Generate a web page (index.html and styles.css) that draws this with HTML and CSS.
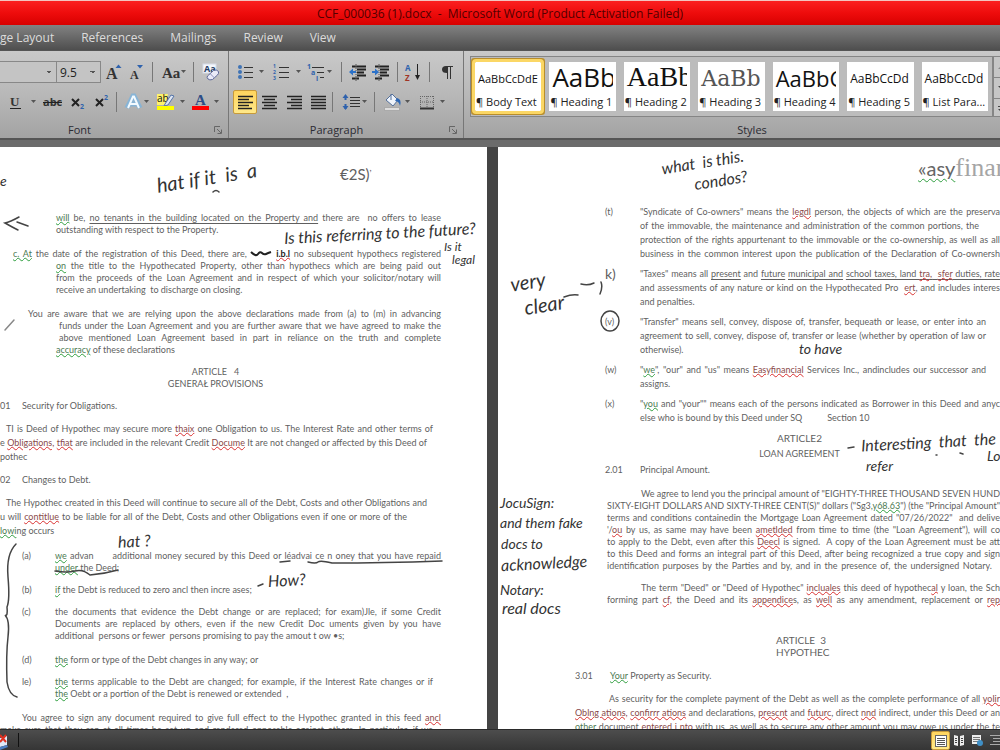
FILE: index.html
```html
<!DOCTYPE html>
<html lang="en">
<head>
<meta charset="utf-8">
<title>CCF_000036 (1).docx - Microsoft Word (Product Activation Failed)</title>
<link rel="stylesheet" href="styles.css">
</head>
<body>
<div class="app">
<header class="titlebar"><h1>CCF_000036 (1).docx &nbsp;-&nbsp; Microsoft Word (Product Activation Failed)</h1></header>
<nav class="tabs"><a href="#">ge Layout</a><a href="#">References</a><a href="#">Mailings</a><a href="#">Review</a><a href="#">View</a></nav>

<section class="ribbon">
  <div class="group group-font">
    <div class="tools">
      <select class="combo combo-name" aria-label="Font name"><option></option></select>
      <select class="combo combo-size" aria-label="Font size"><option>9.5</option></select>
      <button aria-label="Grow font"><svg width="24" height="24"><text x="5" y="19" class="g-serif" font-size="16">A</text><path d="M14.500 8l3-3.500 3 3.500z" fill="#2f62ad"/></svg></button>
      <button aria-label="Shrink font"><svg width="22" height="24"><text x="5" y="19" class="g-serif" font-size="12">A</text><path d="M12 5h6l-3 3.500z" fill="#2f62ad"/></svg></button>
      <i class="sep"></i>
      <button aria-label="Change case"><svg width="30" height="24"><text x="4" y="18" class="g-serif" font-size="15">Aa</text><path d="M23 10h5l-2.500 3z" fill="#555"/></svg></button>
      <i class="sep"></i>
      <button aria-label="Clear formatting"><svg width="24" height="24"><rect x="4" y="4" width="13" height="9" fill="#f4f7fc" stroke="#d5dbe8"/><text x="5" y="12" font-size="9" font-weight="700" fill="#223c66">Aa</text><path d="M8.500 16l6-5.500q3-1.500 5 1 .5 2-1 3.500l-5 4.500q-3 1-4.500-.5-1.500-1.500-.5-3z" fill="#e9eaf7" stroke="#5c6798"/><path d="M11 13.500l4.500 4.500" stroke="#8c93bd"/></svg></button>
    </div>
    <div class="tools tools-low">
      <button aria-label="Underline"><svg width="24" height="24"><text x="7" y="16" class="g-serif" font-size="13" >U</text><path d="M7 18.500h11" stroke="#222"/></svg></button>
      <button aria-label="Underline style"><svg width="13" height="24"><path d="M4 10h5l-2.500 3z" fill="#555"/></svg></button>
      <button aria-label="Strikethrough"><svg width="25" height="24"><text x="3" y="16" font-size="11" font-weight="700" fill="#333">abc</text><path d="M3 12.500h19" stroke="#222"/></svg></button>
      <button aria-label="Subscript"><svg width="24" height="24"><path d="M7 9l7 7M14 9l-7 7" stroke="#222" stroke-width="2"/><text x="15" y="19" font-size="7" font-weight="700" fill="#2f62ad">2</text></svg></button>
      <button aria-label="Superscript"><svg width="22" height="24"><path d="M7 9l7 7M14 9l-7 7" stroke="#222" stroke-width="2"/><text x="15" y="10" font-size="7" font-weight="700" fill="#2f62ad">2</text></svg></button>
      <i class="sep"></i>
      <button aria-label="Text effects"><svg width="21" height="24"><path d="M5 18L11 6h1l6 12M8 14h8" fill="none" stroke="#74b3e4" stroke-width="5" opacity=".7"/><path d="M6 18L11 6.500h1L17 18M8.500 14h6" fill="none" stroke="#f3faff" stroke-width="2"/></svg></button>
      <button aria-label="Text effect styles"><svg width="11" height="24"><path d="M1 10h5l-2.500 3z" fill="#555"/></svg></button>
      <button aria-label="Highlight"><svg width="25" height="24"><path d="M3 4h11l-3 11H3z" fill="#fff36b"/><text x="3" y="12" font-size="10" fill="#111">ab</text><path d="M11 14l6-9 3 1-6 9-4 1z" fill="#dfe6f3" stroke="#5575a8"/><rect x="3" y="16" width="17" height="4" fill="#ff0"/></svg></button>
      <button aria-label="Highlight colour"><svg width="11" height="24"><path d="M1 10h5l-2.500 3z" fill="#555"/></svg></button>
      <button aria-label="Font colour"><svg width="23" height="24"><text x="5" y="15" class="g-serif" font-size="15" style="fill:#2c4d87">A</text><rect x="2" y="16" width="17" height="4" fill="#f00"/></svg></button>
      <button aria-label="Font colours"><svg width="11" height="24"><path d="M1 10h5l-2.500 3z" fill="#555"/></svg></button>
    </div>
    <div class="caption"><span>Font</span><button aria-label="Font dialog"><svg width="10" height="10"><path d="M1.500 7V1.500H7M4 4l4 4M8.500 4.500v4h-4" fill="none" stroke="#666"/></svg></button></div>
  </div>

  <div class="group group-para">
    <div class="tools">
      <button aria-label="Bullets"><svg width="35" height="24"><g fill="#3f73b5"><circle cx="4" cy="7" r="2"/><circle cx="4" cy="12" r="2"/><circle cx="4" cy="17" r="2"/></g><path d="M8 7.500h9M8 12.500h9M8 17.500h9" stroke="#333"/><path d="M23 10h5l-2.500 3z" fill="#555"/></svg></button>
      <button aria-label="Numbering"><svg width="34" height="24"><g fill="#2f62ad" font-size="5" font-weight="700"><text x="2" y="8">1</text><text x="2" y="14">2</text><text x="2" y="20">3</text></g><path d="M8 7.500h10M8 12.500h10M8 17.500h10" stroke="#333"/><path d="M25 10h5l-2.500 3z" fill="#555"/></svg></button>
      <button aria-label="Multilevel list"><svg width="31" height="24"><g fill="#2f62ad" font-size="7" font-weight="700"><text x="2" y="9">1</text><text x="6" y="15">a</text><text x="11" y="21">i</text></g><path d="M7 7.500h12M12 12.500h7M15 17.500h4" stroke="#333"/><path d="M22 10h5l-2.500 3z" fill="#555"/></svg></button>
      <i class="sep"></i>
      <button aria-label="Decrease indent"><svg width="23" height="24"><path d="M5 6.500h14M10 9.500h9M10 12.500h7M10 15.500h9M5 18.500h7" stroke="#222" stroke-width="2"/><path d="M9 4v17" stroke="#555" stroke-dasharray="1 1"/><path d="M2 12l4-3.500V11h3v2H6v2.500z" fill="#2c72c9"/></svg></button>
      <button aria-label="Increase indent"><svg width="22" height="24"><path d="M5 6.500h14M10 9.500h9M10 12.500h7M10 15.500h9M5 18.500h7" stroke="#222" stroke-width="2"/><path d="M9 4v17" stroke="#555" stroke-dasharray="1 1"/><path d="M9 12L5 8.500V11H2v2h3v2.500z" fill="#2c72c9"/></svg></button>
      <i class="sep"></i>
      <button aria-label="Sort"><svg width="21" height="24"><text x="2" y="11" font-size="8" font-weight="700" fill="#2f62ad">A</text><text x="2" y="21" font-size="8" font-weight="700" fill="#a03426">Z</text><path d="M14.500 4v14" stroke="#222"/><path d="M12 15h5l-2.500 5z" fill="#222"/></svg></button>
      <i class="sep"></i>
      <button aria-label="Show marks"><svg width="22" height="24"><path d="M12.500 6v13M15.500 6v13" stroke="#333"/><path d="M17 6H11q-4 0-4 3.500T12 13V6z" fill="#333"/><path d="M11 6.500h7" stroke="#333"/></svg></button>
    </div>
    <div class="tools tools-low">
      <button class="on" aria-label="Align left"><svg width="22" height="22"><path d="M4 5.500h15M4 8.500h11M4 11.500h15M4 14.500h11M4 17.500h14" stroke="#222" stroke-width="1.500"/></svg></button>
      <button aria-label="Align centre"><svg width="25" height="24"><path d="M5 6.500h15M7 9.500h11M5 12.500h15M7 15.500h11M5 18.500h15" stroke="#222" stroke-width="1.500"/></svg></button>
      <button aria-label="Align right"><svg width="25" height="24"><path d="M5 6.500h15M9 9.500h11M5 12.500h15M9 15.500h11M5 18.500h15" stroke="#222" stroke-width="1.500"/></svg></button>
      <button aria-label="Justify"><svg width="20" height="24"><path d="M4 6.500h15M4 9.500h15M4 12.500h15M4 15.500h15M4 18.500h15" stroke="#222" stroke-width="1.500"/></svg></button>
      <i class="sep"></i>
      <button aria-label="Line spacing"><svg width="31" height="24"><path d="M12 7.500h10M12 10.500h10M12 13.500h10M12 16.500h10" stroke="#333"/><path d="M7.500 6v4M7.500 14v5" stroke="#2f62ad" stroke-width="2"/><path d="M4.500 8l3-4 3 4zM4.500 16l3 4 3-4z" fill="#2f62ad"/><path d="M24 10h5l-2.500 3z" fill="#555"/></svg></button>
      <i class="sep"></i>
      <button aria-label="Shading"><svg width="36" height="24"><path d="M6 10l6-6 6 6-5 6z" fill="#eef3fa" stroke="#54709b"/><path d="M11 10V4" stroke="#54709b"/><path d="M17 8q5 1 3 8-1-5-5-5z" fill="#2c66b4"/><rect x="4.500" y="17.500" width="15" height="3" fill="#ddd" stroke="#aaa"/><path d="M25 10h5l-2.500 3z" fill="#555"/></svg></button>
      <button aria-label="Borders"><svg width="32" height="24"><path d="M4.500 6v12M17.500 6v12M11 6v12M4 6.500h14M4 12h14" stroke="#666" stroke-dasharray="1 1" fill="none"/><path d="M4 18.500h14" stroke="#333" stroke-width="2"/><path d="M24 10h5l-2.500 3z" fill="#555"/></svg></button>
    </div>
    <div class="caption"><span>Paragraph</span><button aria-label="Paragraph dialog"><svg width="10" height="10"><path d="M1.500 7V1.500H7M4 4l4 4M8.500 4.500v4h-4" fill="none" stroke="#666"/></svg></button></div>
  </div>

  <div class="group group-styles">
    <div class="gallery-row">
      <div class="gallery">
        <button class="style chosen"><b class="s-small">AaBbCcDdE</b><span>¶ Body Text</span></button>
        <button class="style"><b class="s-h1">AaBb</b><span>¶ Heading 1</span></button>
        <button class="style"><b class="s-h2">AaBb</b><span>¶ Heading 2</span></button>
        <button class="style"><b class="s-h3">AaBb</b><span>¶ Heading 3</span></button>
        <button class="style"><b class="s-h4">AaBbC</b><span>¶ Heading 4</span></button>
        <button class="style"><b class="s-body">AaBbCcDd</b><span>¶ Heading 5</span></button>
        <button class="style"><b class="s-body">AaBbCcDd</b><span>¶ List Para...</span></button>
      </div>
      <div class="scroller">
        <button aria-label="Scroll up"><svg width="8" height="20"><path d="M4 12l4-4v4z" fill="#888"/></svg></button>
        <button aria-label="Scroll down"><svg width="8" height="20"><path d="M4 8h4v4z" fill="#444"/></svg></button>
        <button aria-label="More styles"><svg width="8" height="20"><path d="M4 7.500h4" stroke="#444"/><path d="M4 10h4v4z" fill="#444"/></svg></button>
      </div>
    </div>
    <div class="caption"><span>Styles</span></div>
  </div>
</section>

<main class="desk">
<article class="page page-one">
  <p class="mark">€2S)<small>,</small></p>
  <div class="para in56">
    <span class="line"><i class="gr">will</i> be, <u>no tenants in the building located on the Property and</u> there are &nbsp;no offers to lease</span>
    <span class="line nat">outstanding with respect to the Property.</span>
  </div>
  <div class="para in56 gap-m">
    <span class="line hang"><i class="gr">c. At</i> the date of the registration of this Deed, there are, <svg class="scrawl" width="22" height="8"><path d="M1 3q5 5 7 2t4-1 4 1 5-2" fill="none" stroke="#222" stroke-width="2"/></svg> <i class="rd dark">i.b.l</i> no subsequent hypothecs registered</span>
    <span class="line"><i class="gr">on</i> the title to the Hypothecated Property, other than hypothecs which are being paid out</span>
    <span class="line">from the proceeds of the Loan Agreement and in respect of which your solicitor/notary will</span>
    <span class="line nat">receive an undertaking &nbsp;to discharge on closing.</span>
  </div>
  <div class="para in56 gap-m">
    <span class="line back">You are aware that we are relying upon the above declarations made from (a) to (m) in advancing</span>
    <span class="line nudge">funds under the Loan Agreement and you are further aware that we have agreed to make the</span>
    <span class="line nudge">above mentioned Loan Agreement based in part in reliance on the truth and complete</span>
    <span class="line nat"><i class="gr">accuracy</i> of these declarations</span>
  </div>
  <div class="para centre gap-s"><span>ARTICLE &nbsp; 4</span><span>GENERAŁ PROVISIONS</span></div>
  <div class="para item sec gap-s"><span>01</span><span>Security for Obligations.</span></div>
  <div class="para loose gap-s">
    <span class="line first r8">TI is Deed of Hypothec may secure more <i class="rd">thaix</i> one Obligation to us. The Interest Rate and other terms of</span>
    <span class="line r14">e <i class="rd">Obligations,</i> <i class="rd">tfiat</i> are included in the relevant Credit <i class="rd">Docume</i> It are not changed or affected by this Deed of</span>
    <span class="line nat">pothec</span>
  </div>
  <div class="para item sec gap-s"><span>02</span><span>Changes to Debt.</span></div>
  <div class="para loose gap-s">
    <span class="line first r14">The Hypothec created in this Deed will continue to secure all of the Debt, Costs and other Obligations and</span>
    <span class="line r34">u will <i class="rd">contitlue</i> to be liable for all of the Debt, Costs and other Obligations even if one or more of the</span>
    <span class="line nat"><i class="gr">lowi</i>ng occurs</span>
  </div>
  <div class="para item gap-m"><span>(a)</span><div>
    <span class="line"><i class="gr">we</i> advan &nbsp; &nbsp; &nbsp;additional money secured by this Deed or léadvai ce n oney that you have repaid</span>
    <span class="line nat"><i class="gr">under</i> the Deed;</span></div></div>
  <div class="para item gap-s"><span>(b)</span><div><span class="line nat"><i class="gr">if</i> the Debt is reduced to zero ancl then incre ases;</span></div></div>
  <div class="para item gap-s"><span>(c)</span><div>
    <span class="line">the documents that evidence the Debt change or are replaced; for exam)Jle, if some Credit</span>
    <span class="line">Documents are replaced by others, even if the new Credit Doc uments given by you have</span>
    <span class="line nat">additional &nbsp;persons or fewer &nbsp;persons promising to pay the amout t ow •s;</span></div></div>
  <div class="para item gap-m"><span>(d)</span><div><span class="line nat"><i class="gr">the</i> form or type of the Debt changes in any way; or</span></div></div>
  <div class="para item gap-s"><span>le)</span><div>
    <span class="line r8"><i class="gr">the</i> terms applicable to the Debt are changed; for example, if the Interest Rate changes or if</span>
    <span class="line nat"><i class="gr">the</i> Oebt or a portion of the Debt is renewed or extended &nbsp;,</span></div></div>
  <div class="para gap-m">
    <span class="line in22">You agree to sign any document required to give full effect to the Hypothec granted in this feed <i class="rd">ancl</i></span>
    <span class="line r8">make sure that they can at all times be set up and rendered opposable against others. In particular, if we</span>
  </div>

  <svg class="ink" aria-hidden="true"><g fill="none" stroke="#444" stroke-width="1.500" stroke-linecap="round">
    <path d="M19 70q-9 5-14 6 7 4 13 7M17 75l11 4"/><path d="M5 183l9-10" stroke="#888"/>
    <path d="M16 397Q6 407 8 430t-1 30q1 10-2 8 5 5 3 22t-1 45q2 13 10 15"/>
    <path d="M55 424q12 2 20 0t15 4q14-1 28-5"/>
    <path d="M280 415l10-1M308 415q8 2 10 0t14 1q50 0 110-2"/><path d="M258 439l5-2M213 45q3-3 6 0"/></g></svg>
  <span class="hand">e</span>
  <span class="hand tilt large" style="left:156px;top:20px">hat if it &nbsp;is &nbsp;a</span>
  <span class="hand slight wide" style="left:284px;top:76px">Is this referring to the future?</span>
  <span class="hand small" style="left:444px;top:90px">Is it</span>
  <span class="hand small" style="left:452px;top:103px">legal</span>
  <span class="hand slight wide" style="left:118px;top:384px">hat ?</span>
  <span class="hand slight wide" style="left:268px;top:423px">How?</span>
</article>

<article class="page page-two">
  <p class="brand"><i class="gr">«asy</i><b>finan</b></p>
  <div class="clauses">
    <div class="clause"><span>(t)</span><div>
      <span class="line">"Syndicate of Co-owners" means the <i class="rd">legdl</i> person, the objects of which are the preserva</span>
      <span class="line r21">of the immovable, the maintenance and administration of the common portions, the</span>
      <span class="line">protection of the rights appurtenant to the immovable or the co-ownership, as well as all</span>
      <span class="line">business in the common interest upon the publication of the Declaration of Co-ownersh</span></div></div>
    <div class="clause"><span class="big">k)</span><div>
      <span class="line">"Taxes" means all <u>present</u> and <u>future</u> <u>municipal and</u> <u>school taxes, land <i class="rd">tra,</i> &nbsp;<i class="rd">sfer</i> duties, rate</u></span>
      <span class="line">and assessments of any nature or kind on the Hypothecated Pro &nbsp;<i class="rd">ert</i>, and includes interes</span>
      <span class="line nat">and penalties.</span></div></div>
    <div class="clause"><span>(v)</span><div>
      <span class="line r14">"Transfer" means sell, convey, dispose of, transfer, bequeath or lease, or enter into an</span>
      <span class="line r14">agreement to sell, convey, dispose of, transfer or lease (whether by operation of law or</span>
      <span class="line nat">otherwise).</span></div></div>
    <div class="clause"><span>(w)</span><div>
      <span class="line r14">"<i class="gr">we</i>", "our" and "us" means <i class="rd">Easyfinancial</i> Services Inc., andincludes our successor and</span>
      <span class="line nat">assigns.</span></div></div>
    <div class="clause"><span>(x)</span><div>
      <span class="line">"<i class="gr">you</i> and "your"" means each of the persons indicated as Borrower in this Deed and anyc</span>
      <span class="line nat tabbed"><span>else who is bound by this Deed under SQ</span><span>Section 10</span></span></div></div>
  </div>
  <div class="headline"><span class="title">ARTICLE2</span><span>LOAN AGREEMENT</span></div>
  <div class="clause headrow"><span>2.01</span><span>Principal Amount.</span></div>
  <div class="para body2 gap-s">
    <span class="line start">We agree to lend you the principal amount of "EIGHTY-THREE THOUSAND SEVEN HUNDRE</span>
    <span class="line">SIXTY-EIGHT DOLLARS AND SIXTY-THREE CENT(S)" dollars ("Sg3<i class="gr">,y68.63</i>") (the "Principal Amount"</span>
    <span class="line">terms and conditions containedin the Mortgage Loan Agreement dated "07/26/2022" &nbsp;and delive</span>
    <span class="line">'/<i class="rd">ou</i> by us, as same may have been <i class="rd">ametlded</i> from time to time (the "Loan Agreement"), will co</span>
    <span class="line">to apply to the Debt, even after this <i class="rd">Deecl</i> is signed. &nbsp;A copy of the Loan Agreement must be att</span>
    <span class="line">to this Deed and forms an integral part of this Deed, after being recognized a true copy and sign</span>
    <span class="line r8">identification purposes by the Parties and by, and in the presence of, the undersigned Notary.</span>
  </div>
  <div class="para body2 gap-s">
    <span class="line start">The term "Deed" or "Deed of Hypothec" <i class="rd">incluales</i> this deed of hypothec<i class="rd">al</i> y loan, the Sch</span>
    <span class="line">forming part <i class="rd">cf,</i> the Deed and its <i class="rd">appendice</i>s, as <i class="rd">well</i> as any amendment, replacement or <i class="rd">rep</i></span>
  </div>
  <div class="para article3"><span>ARTICLE &nbsp;3</span><span>HYPOTHEC</span></div>
  <div class="para clause sec3 gap-m"><span>3.01</span><span><i class="gr">Your</i> Property as Security.</span></div>
  <div class="para loose body3 gap-s">
    <span class="line start">As security for the complete payment of the Debt as well as the complete performance of all <i class="rd">yolir</i></span>
    <span class="line"><i class="rd">Oblng ations,</i> <i class="rd">confirrr ations</i> and declarations, <i class="rd">prescnt</i> and <i class="rd">futurc</i>, direct <i class="rd">nnd</i> indirect, under this Deed or an</span>
    <span class="line"><i class="gr">other</i> document <i class="rd">entered</i> <i class="rd">i nto</i> with us, as well as to secure any other amount you may owe us under the te</span>
  </div>

  <svg class="ink" aria-hidden="true"><g fill="none" stroke="#444" stroke-width="1.500" stroke-linecap="round">
    <ellipse cx="112" cy="174" rx="9" ry="10"/><path d="M83 137q7 2 13-1M103 135q2 5-1 12M350 301l6-1M66 150q8-3 14-2M438 308h1M462 306l3 1"/></g></svg>
  <span class="hand tilt wide" style="left:163px;top:5px">what &nbsp;is this.</span>
  <span class="hand tilt wide" style="left:196px;top:23px">condos?</span>
  <span class="hand tilt large" style="left:12px;top:124px">very</span>
  <span class="hand tilt large" style="left:26px;top:147px">clear</span>
  <span class="hand" style="left:301px;top:192px">to have</span>
  <span class="hand slight wide" style="left:363px;top:285px">Interesting &nbsp;that &nbsp;the</span>
  <span class="hand" style="left:368px;top:309px">refer</span>
  <span class="hand" style="left:489px;top:299px">Lo</span>
  <span class="hand" style="left:2px;top:346px">JocuSign:</span>
  <span class="hand" style="left:2px;top:366px">and them fake</span>
  <span class="hand" style="left:3px;top:387px">docs to</span>
  <span class="hand slight wide" style="left:3px;top:406px">acknowledge</span>
  <span class="hand" style="left:2px;top:433px">Notary:</span>
  <span class="hand wide" style="left:4px;top:451px">real docs</span>
</article>
</main>

<footer class="status">
  <button aria-label="Proofing errors"><svg width="19" height="20"><path d="M0 8l7-2v9l-7 2z" fill="#dfe8f7"/><path d="M0 17l7-2 1 2-8 3z" fill="#4d7fc4"/><path d="M0 5l6 7M6 5l-6 7" stroke="#e03020" stroke-width="2"/><path d="M18.500 3v14" stroke="#111"/></svg></button>
  <div class="views">
    <button class="on" aria-label="Print layout"><svg width="17" height="17"><rect x="3.500" y="3.500" width="11" height="11" fill="#fff" stroke="#666"/><path d="M5 6.500h8M5 8.500h8M5 10.500h8M5 12.500h8" stroke="#555"/></svg></button>
    <button aria-label="Full screen reading"><svg width="18" height="18"><path d="M4 4l4 1v10l-4-1zM14 4l-4 1v10l4-1z" fill="#eee"/><path d="M5 7.500h2M5 9.500h2M5 11.500h2M11 7.500h2M11 9.500h2M11 11.500h2" stroke="#444"/></svg></button>
    <button aria-label="Web layout"><svg width="18" height="18"><rect x="4" y="4" width="9" height="9" fill="#eee"/><path d="M5 6.500h7M5 8.500h7M5 10.500h5" stroke="#777"/><circle cx="12" cy="12" r="3" fill="#3f8fc6"/></svg></button>
    <button class="cut" aria-label="Outline"><svg width="14" height="18"><path d="M4 4.500h10M7 7.500h7M7 10.500h7M4 13.500h10" stroke="#aaa"/></svg></button>
  </div>
</footer>
</div>
</body>
</html>
```
FILE: styles.css
```css
* { box-sizing: border-box; }
html, body { height: 100%; }
body { margin: 0; background: #6b6b6b; font-family: "Open Sans", "Noto Sans", sans-serif; color: #222; }
button { padding: 0; border: 0; background: none; font: inherit; color: inherit; display: block; flex: none; }
svg { display: block; flex: none; }
p, h1 { margin: 0; font-weight: 400; }
.app { height: 100vh; display: flex; flex-direction: column; overflow: hidden; }

.titlebar { border-top: 1px solid #f3c4c0; height: 25px; flex: none; background: linear-gradient(#fb2020, #ee0c0c 50%, #d80000); display: flex; align-items: center; justify-content: center; }
.titlebar h1 { font-size: 12px; color: #520000; }
.tabs { height: 26px; flex: none; display: flex; align-items: center; gap: 27px; background: linear-gradient(#828282, #4e4e4e); border-bottom: 1px solid #555; }
.tabs a { color: #dcdcdc; font-size: 12px; text-decoration: none; white-space: nowrap; }

.ribbon { height: 89px; flex: none; display: grid; grid-template-columns: 229px 235px 1fr; background: linear-gradient(#c9c9c9, #b8b8b8 50%, #a3a3a3); border-bottom: 2px solid #555; }
.group { display: flex; flex-direction: column; min-width: 0; border-right: 1px solid #777; overflow: hidden; }
.tools { display: flex; align-items: center; height: 24px; margin-top: 9px; }
.tools-low { margin-top: 6px; }
.group-font .tools-low { padding-left: 3px; }
.group-para .tools { padding-left: 7px; }
.group-para .tools-low { padding-left: 4px; }
.sep { width: 1px; height: 20px; margin: 0 5px; background: #777; flex: none; }
.g-serif { font-family: "Liberation Serif", serif; font-weight: 700; fill: #333; }
.combo { appearance: none; height: 22px; border: 1px solid #888; border-radius: 0; margin: 0; padding: 0 3px; font: 12px "Open Sans", sans-serif; color: #222; background: linear-gradient(45deg, transparent 50%, #555 50%) right 7px center / 3px 3px no-repeat, linear-gradient(135deg, #555 50%, transparent 50%) right 4px center / 3px 3px no-repeat, #c4c4c4; }
.combo-name { width: 57px; border-left: 0; }
.combo-size { width: 44px; border-left: 0; }
.on { background: linear-gradient(#ffd55e, #ffe889); border: 1px solid #c79a3a; border-radius: 2px; }
.caption { margin-top: auto; height: 18px; display: flex; align-items: center; font-size: 11px; color: #2b2b33; }
.caption span { flex: 1; text-align: center; }
.caption button { margin: 2px 5px 0 4px; }
.group-font .caption { margin-left: -50px; }
.group-styles { border-right: 0; }
.group-styles .caption { margin-right: -40px; }

.gallery-row { display: flex; margin: 5px 0 0 6px; height: 61px; }
.gallery { flex: 1; min-width: 0; display: grid; grid-template-columns: repeat(7, minmax(0, 1fr)); gap: 8px; padding: 5px 4px; border: 1px solid #858585; background: #bcbcbc; }
.style { background: #fff; display: flex; flex-direction: column; overflow: hidden; width: 100%; padding: 0 1px; text-align: left; white-space: nowrap; }
.style b { font-weight: 400; height: 33px; line-height: 33px; padding-left: 2px; color: #111; margin-right: 2px; overflow: hidden; align-self: stretch; }
.style span { font-size: 11px; line-height: 14px; }
.chosen { outline: 3px solid #fbd765; border-radius: 1px; box-shadow: 0 0 0 4px #b98e2c; }
.s-body { font-size: 12px; }
.s-small { font-size: 11px; }
.style .s-h1 { font-size: 26px; line-height: 30px; }
.style .s-h2 { font-size: 28px; line-height: 30px; font-family: "Liberation Serif", serif; }
.style .s-h3 { font-size: 22px; font-family: "DejaVu Serif", serif; color: #555; }
.s-h4 { font-size: 22px; }
.scroller { width: 7px; display: grid; grid-template-rows: repeat(3, 1fr); overflow: hidden; background: #c6c6c6; border: 1px solid #858585; border-right: 0; }
.scroller button + button { border-top: 1px solid #858585; }

.desk { flex: 1; min-height: 0; display: grid; grid-template-columns: 487fr 502fr; column-gap: 11px; border-top: 7px solid #6b6b6b; background: #444; }
.page { position: relative; overflow: hidden; min-width: 0; background: #fff; font-family: Lato, "Open Sans", sans-serif; font-size: 9px; line-height: 12px; color: #5f5f5f; }
.page-one { padding: 15px 46px 0 0; }
.mark { font-size: 15px; line-height: 24px; padding-left: 340px; margin-bottom: 26px; }
.mark small { font-size: 9px; line-height: 12px; vertical-align: top; }
.line { display: block; white-space: nowrap; text-align: justify; text-align-last: justify; }
.nat { text-align-last: left; }
.gap-s { margin-top: 10px; }
.gap-m { margin-top: 12px; }
.loose { line-height: 14px; }
.in56 { padding-left: 56px; }
.in22 { padding-left: 22px; }
.hang { margin-left: -43px; }
.back { margin-left: -28px; }
.nudge { padding-left: 3px; }
.first { padding-left: 6px; }
.r8 { margin-right: 8px; }
.r14 { margin-right: 14px; }
.r21 { margin-right: 21px; }
.r34 { margin-right: 34px; }
.item { display: grid; grid-template-columns: 33px 1fr; padding-left: 22px; }
.sec { grid-template-columns: 22px 1fr; padding-left: 0; }
.centre { display: flex; flex-direction: column; text-align: center; padding-right: 10px; }
.gr, .rd { font-style: normal; text-decoration: underline wavy 1px #2f9e3f; text-underline-offset: 0; }
.gr { color: #4c7a52; }
.rd { text-decoration-color: #d93030; color: #8a4a4a; }
.dark { color: #222; font-weight: 700; }
u { text-underline-offset: 2px; text-decoration-thickness: 1px; }
.scrawl { display: inline-block; }

.page-two { padding-top: 6px; }
.brand { height: 52px; line-height: 30px; font-size: 20px; padding-left: 420px; white-space: nowrap; }
.brand .gr { color: #666; text-underline-offset: 2px; }
.brand b { font: 26px/30px "Liberation Serif", serif; color: #a5a5a5; }
.clauses { display: flex; flex-direction: column; gap: 6px; line-height: 14px; padding-left: 107px; }
.clause { display: grid; grid-template-columns: 35px minmax(0, 1fr); }
.big { font-size: 14px; }
.tabbed { display: flex; gap: 25px; }
.headline { display: flex; flex-direction: column; align-items: center; line-height: 16px; padding: 5px 0 0 101px; }
.title, .article3 { font-size: 10px; }
.headrow { line-height: 16px; padding-left: 107px; }
.body2 { padding-left: 109px; }
.start { padding-left: 34px; }
.article3 { margin-top: 28px; display: flex; flex-direction: column; padding-left: 278px; }
.sec3 { padding-left: 77px; }
.body3 { padding-left: 77px; }

.ink { position: absolute; inset: 0; width: 100%; height: 100%; }
.hand { position: absolute; left: 0; top: 24px; font-style: italic; font-size: 14px; line-height: 20px; color: #333; white-space: nowrap; }
.wide { font-size: 16px; }
.small { font-size: 12px; }
.large { font-size: 20px; }
.tilt { transform: rotate(-9deg); }
.slight { transform: rotate(-3deg); }

.status { height: 21px; flex: none; display: flex; align-items: center; justify-content: space-between; background: linear-gradient(#4d4d4d, #353535); border-top: 1px solid #2a2a2a; overflow: hidden; }
.views { display: flex; align-items: center; }
.cut { width: 14px; overflow: hidden; }
```
